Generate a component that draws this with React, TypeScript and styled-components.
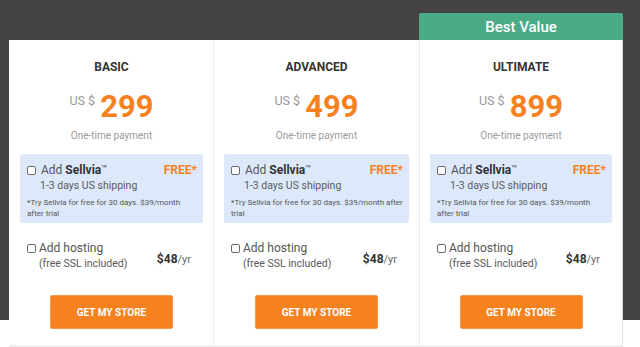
import styled, { createGlobalStyle } from 'styled-components';

const GlobalStyle = createGlobalStyle`
	html, body {
		margin: 0;
		padding: 0;
	}
	body {
		width: 640px;
		height: 347px;
		overflow: hidden;
		font-family: Roboto, "Liberation Sans", Arial, sans-serif;
		background: linear-gradient(to bottom, #434343 0, #434343 320px, #ffffff 320px);
	}
`;

const Plans = styled.div`
	display: grid;
	grid-template-columns: 204px 206px 204px;
	margin-left: 9px;
	padding-top: 13px;
`;

const Column = styled.div`
	display: flex;
	flex-direction: column;
`;

const Badge = styled.div<{ $visible: boolean }>`
	height: 27px;
	display: flex;
	align-items: center;
	justify-content: center;
	border-radius: 2px 2px 0 0;
	background: ${(p) => (p.$visible ? '#4aab87' : 'transparent')};
	color: #ffffff;
	font-size: 15px;
	font-weight: 500;
	visibility: ${(p) => (p.$visible ? 'visible' : 'hidden')};
`;

const Card = styled.div<{ $first: boolean; $last: boolean }>`
	height: 285px;
	background: #ffffff;
	border-left: ${(p) => (p.$first ? 'none' : '1px solid #ececec')};
	border-right: ${(p) => (p.$last ? '1px solid #e2e2e2' : 'none')};
	border-bottom: 2px solid #f0f0f0;
	display: flex;
	flex-direction: column;
	align-items: stretch;
	padding: 20px 10px 0 ${(p) => (p.$first ? 11 : 10)}px;
	box-sizing: content-box;
`;

const Title = styled.div`
	font-size: 12px;
	line-height: 14px;
	font-weight: 700;
	color: #333333;
	text-align: center;
`;

const PriceRow = styled.div`
	display: flex;
	justify-content: center;
	align-items: flex-start;
	gap: 5px;
	margin-top: 17px;
`;

const Currency = styled.span`
	font-size: 12.5px;
	line-height: 14px;
	color: #9a9a9a;
	margin-top: 3px;
`;

const Amount = styled.span`
	font-size: 31px;
	line-height: 31px;
	font-weight: 700;
	color: #f5821f;
`;

const PaymentNote = styled.div`
	font-size: 10px;
	line-height: 12px;
	color: #9a9a9a;
	text-align: center;
	margin-top: 8px;
`;

const AddonBox = styled.div`
	margin-top: 12px;
	background: #dde9fb;
	border-radius: 2px;
	padding: 9px 6px 4px 7px;
	height: 69px;
	box-sizing: border-box;
`;

const AddonHead = styled.div`
	display: flex;
	align-items: center;
	justify-content: space-between;
`;

const CheckLabel = styled.label<{ $gap: number }>`
	display: flex;
	align-items: center;
	gap: ${(p) => p.$gap}px;
	font-size: 12px;
	line-height: 14px;
	color: #555555;
	b {
		color: #333333;
		font-weight: 700;
	}
	sup {
		font-size: 10px;
		line-height: 0;
		vertical-align: 2px;
		color: #444444;
	}
`;

const Check = styled.input.attrs({ type: 'checkbox' })`
	appearance: none;
	margin: 0;
	width: 9px;
	height: 9px;
	box-sizing: border-box;
	border: 1px solid #6a6a6a;
	border-radius: 2px;
	background: #ffffff;
`;

const Free = styled.span`
	font-size: 12px;
	line-height: 14px;
	font-weight: 700;
	color: #f5821f;
`;

const SubLine = styled.div<{ $indent: number }>`
	font-size: 10.5px;
	line-height: 12px;
	color: #5a5a5a;
	padding-left: ${(p) => p.$indent}px;
	margin-top: 3px;
`;

const Fine = styled.div`
	font-size: 8px;
	line-height: 11px;
	color: #555555;
	margin-top: 5px;
`;

const HostingRow = styled.div`
	display: flex;
	align-items: center;
	justify-content: space-between;
	margin-top: 18px;
	padding: 0 12px 0 7px;
`;

const HostingPrice = styled.div`
	font-size: 12px;
	font-weight: 700;
	color: #333333;
	margin-top: 6px;
	span {
		font-weight: 400;
		font-size: 11px;
		color: #666666;
	}
`;

const StoreButton = styled.button`
	align-self: center;
	margin-top: 25px;
	width: 123px;
	height: 34px;
	border: 1px solid #f79a4c;
	border-radius: 2px;
	background: #f5821f;
	color: #ffffff;
	font-family: inherit;
	font-size: 10px;
	font-weight: 700;
	cursor: pointer;
`;

interface IPlan {
	name: string;
	price: number;
	best?: boolean;
}

const plans: IPlan[] = [
	{ name: 'BASIC', price: 299 },
	{ name: 'ADVANCED', price: 499 },
	{ name: 'ULTIMATE', price: 899, best: true },
];

const PlanCard = ({ plan, index }: { plan: IPlan; index: number }) => (
	<Column>
		<Badge $visible={!!plan.best}>Best Value</Badge>
		<Card $first={index === 0} $last={index === plans.length - 1}>
			<Title>{plan.name}</Title>
			<PriceRow>
				<Currency>US $</Currency>
				<Amount>{plan.price}</Amount>
			</PriceRow>
			<PaymentNote>One-time payment</PaymentNote>
			<AddonBox>
				<AddonHead>
					<CheckLabel $gap={5}>
						<Check />
						<span>
							Add <b>Sellvia</b>
							<sup>™</sup>
						</span>
					</CheckLabel>
					<Free>FREE*</Free>
				</AddonHead>
				<SubLine $indent={13}>1-3 days US shipping</SubLine>
				<Fine>*Try Sellvia for free for 30 days. $39/month after trial</Fine>
			</AddonBox>
			<HostingRow>
				<div>
					<CheckLabel $gap={3}>
						<Check />
						<span>Add hosting</span>
					</CheckLabel>
					<SubLine $indent={12}>(free SSL included)</SubLine>
				</div>
				<HostingPrice>
					$48<span>/yr</span>
				</HostingPrice>
			</HostingRow>
			<StoreButton>GET MY STORE</StoreButton>
		</Card>
	</Column>
);

export default function App() {
	return (
		<>
			<GlobalStyle />
			<Plans>
				{plans.map((plan, i) => (
					<PlanCard key={plan.name} plan={plan} index={i} />
				))}
			</Plans>
		</>
	);
}
